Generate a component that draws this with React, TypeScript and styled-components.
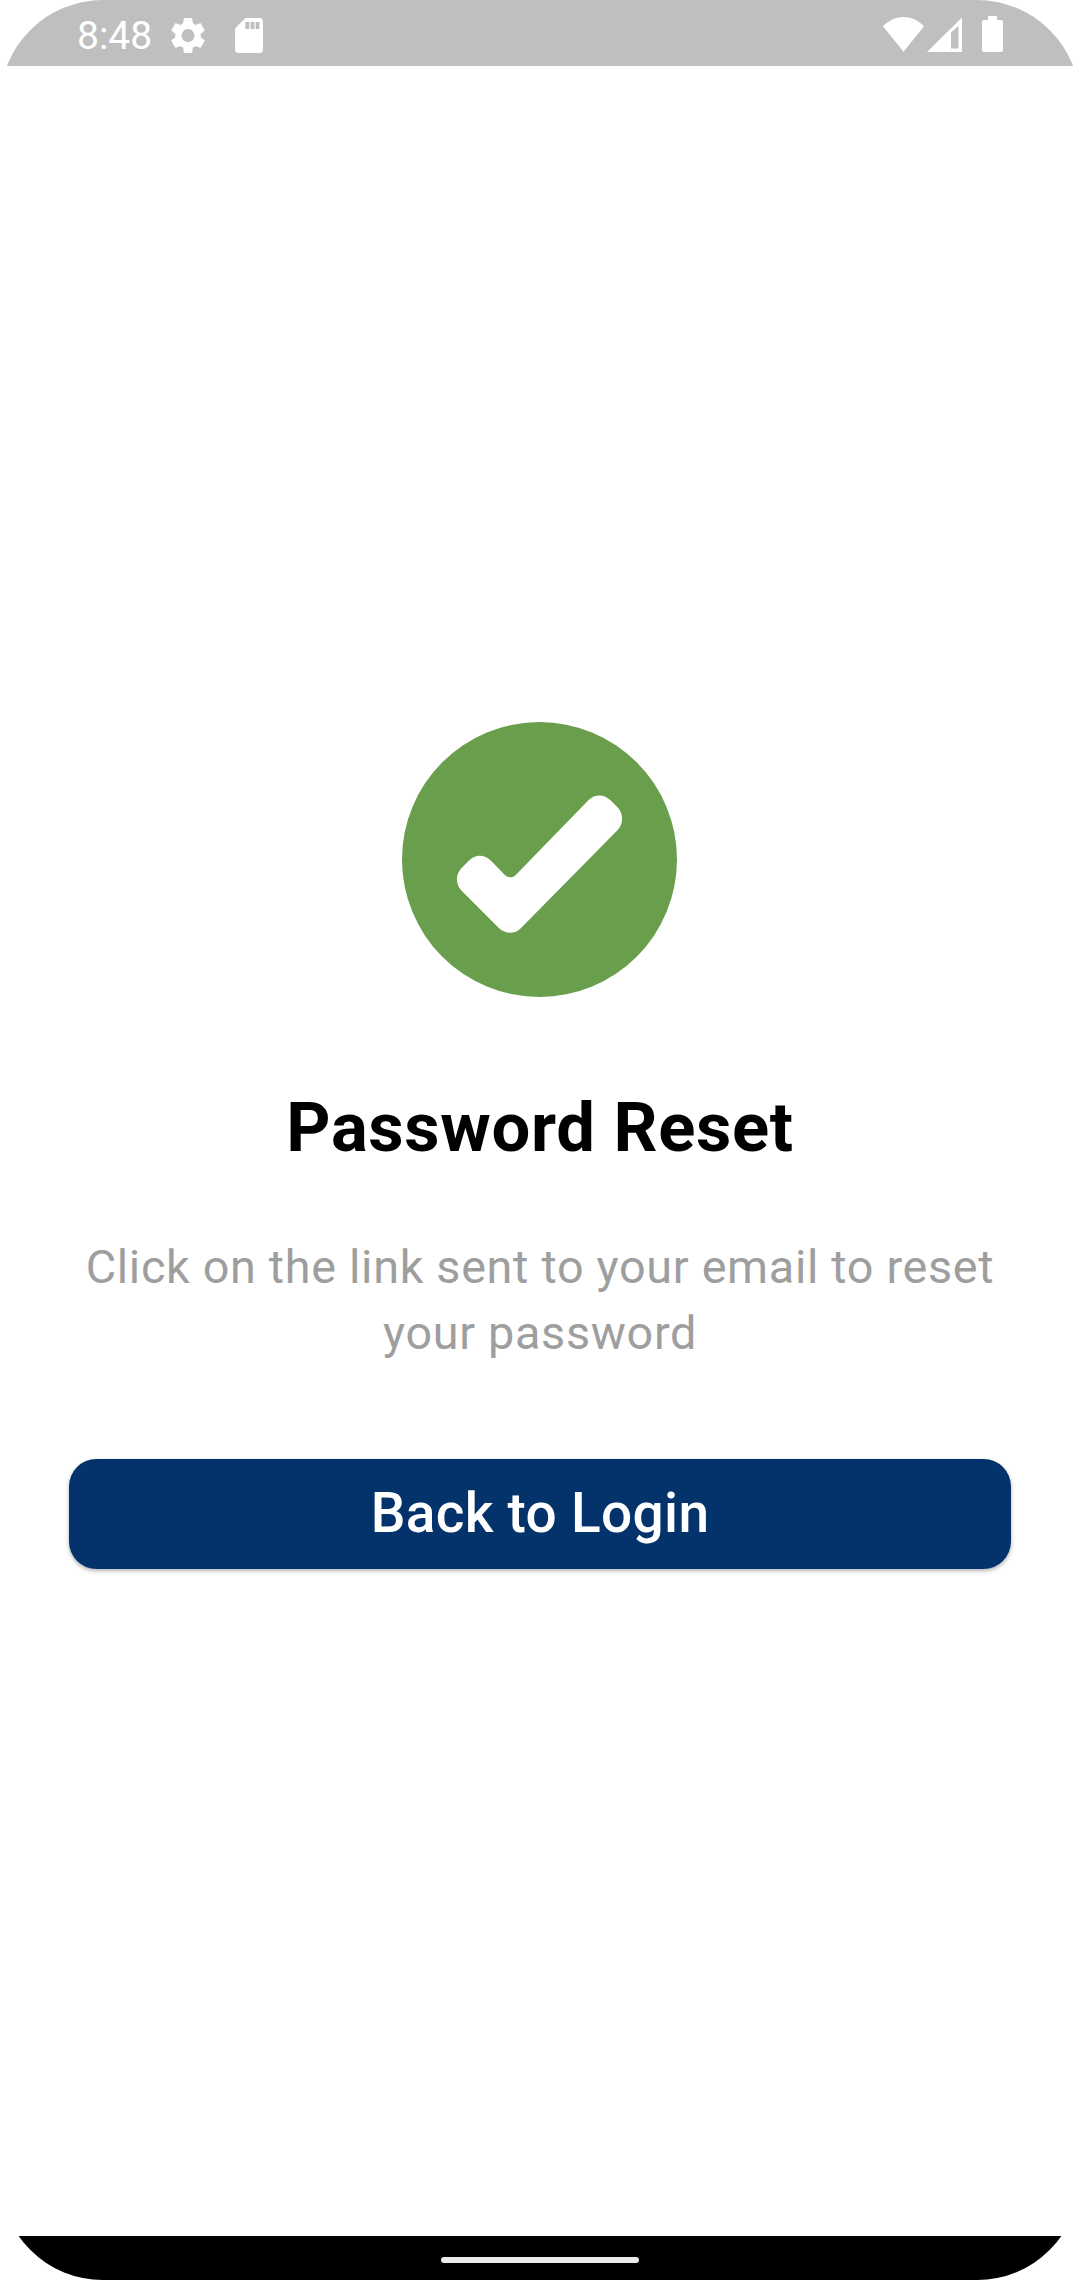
import React from "react";
import styled, { createGlobalStyle } from "styled-components";

const GlobalStyle = createGlobalStyle`
  html, body { margin: 0; padding: 0; background: #fff; }
  * { box-sizing: border-box; }
`;

const Screen = styled.div`
  display: flex;
  flex-direction: column;
  width: 1080px;
  height: 2280px;
  overflow: hidden;
  border-radius: 103px;
  background: #fff;
  font-family: Roboto, "Liberation Sans", sans-serif;
`;

const StatusBar = styled.header`
  display: flex;
  justify-content: space-between;
  flex: none;
  height: 66px;
  padding: 0 77px 0 77px;
  background: #bfbfbf;
  color: #fff;
`;

const StatusGroup = styled.div`
  display: flex;
  align-items: flex-start;
`;

const Clock = styled.span`
  width: 94px;
  padding-top: 13px;
  font-size: 39px;
  line-height: 46px;
  letter-spacing: 0;
  white-space: nowrap;
`;

const StatusIcon = styled.svg<{ $top: number; $left?: number }>`
  display: block;
  flex: none;
  margin-top: ${(p) => p.$top}px;
  margin-left: ${(p) => p.$left ?? 0}px;
  fill: currentColor;
`;

const Main = styled.main`
  display: flex;
  flex: 1;
  flex-direction: column;
  align-items: center;
  padding: 656px 69px 0;
`;

const SuccessBadge = styled.svg`
  display: block;
  flex: none;
  width: 275px;
  height: 275px;
  margin-right: 1px;
`;

const Title = styled.h1`
  margin: 91px 0 0;
  font-size: 68.75px;
  line-height: 80px;
  font-weight: 700;
  letter-spacing: 0.6875px;
  color: #000;
  white-space: nowrap;
`;

const Message = styled.p`
  width: 930px;
  margin: 66px 0 0;
  font-size: 46.75px;
  line-height: 66px;
  letter-spacing: 0.6875px;
  text-align: center;
  color: #9e9e9e;
`;

const LoginButton = styled.button`
  width: 100%;
  height: 110px;
  margin-top: 93px;
  padding: 0 0 2px;
  border: 0;
  border-radius: 27.5px;
  background: #04336b;
  box-shadow: 0 2px 4px rgba(0, 0, 0, 0.3);
  color: #fff;
  font: 500 55px/64px Roboto, "Liberation Sans", sans-serif;
  letter-spacing: 0.3px;
`;

const NavBar = styled.footer`
  display: flex;
  flex: none;
  justify-content: center;
  height: 44px;
  padding-top: 21px;
  background: #000;
`;

const HomeHandle = styled.div`
  width: 198px;
  height: 6px;
  border-radius: 3px;
  background: #ebebeb;
`;

export default function App() {
  return (
    <>
      <GlobalStyle />
      <Screen>
        <StatusBar>
          <StatusGroup>
            <Clock>8:48</Clock>
            <StatusIcon $top={18} width="34" height="35" viewBox="2.4 2.4 19.2 19.2" preserveAspectRatio="none">
              <path d="M19.14 12.94c.04-.3.06-.61.06-.94 0-.32-.02-.64-.07-.94l2.03-1.58c.18-.14.23-.41.12-.61l-1.92-3.32c-.12-.22-.37-.29-.59-.22l-2.39.96c-.5-.38-1.03-.7-1.62-.94L14.4 2.81c-.04-.24-.24-.41-.48-.41h-3.84c-.24 0-.43.17-.47.41L9.25 5.35C8.66 5.59 8.12 5.92 7.63 6.29L5.24 5.33c-.22-.08-.47 0-.59.22L2.74 8.87c-.12.21-.08.47.12.61l2.03 1.58C4.84 11.36 4.8 11.69 4.8 12s.02.64.07.94l-2.03 1.58c-.18.14-.23.41-.12.61l1.92 3.32c.12.22.37.29.59.22l2.39-.96c.5.38 1.03.7 1.62.94l.36 2.54c.05.24.24.41.48.41h3.84c.24 0 .44-.17.47-.41l.36-2.54c.59-.24 1.13-.56 1.62-.94l2.39.96c.22.08.47 0 .59-.22l1.92-3.32c.12-.22.07-.47-.12-.61L19.14 12.94zM12 15.6c-1.98 0-3.6-1.62-3.6-3.6s1.62-3.6 3.6-3.6 3.6 1.62 3.6 3.6-1.62 3.6-3.6 3.6z" />
            </StatusIcon>
            <StatusIcon $top={18} $left={30} width="28" height="35" viewBox="0 0 28 35">
              <path
                fillRule="evenodd"
                d="M11.5 0H24.5A3.5 3.5 0 0 1 28 3.5V31.5A3.5 3.5 0 0 1 24.5 35H3.5A3.5 3.5 0 0 1 0 31.5V12Q0 10.6 1 9.6L9.6 .8Q10.4 0 11.5 0ZM10.3 4V11H14.3V4ZM15.6 4V11H19.4V4ZM20.7 4V11H24.4V4Z"
              />
            </StatusIcon>
          </StatusGroup>
          <StatusGroup>
            <StatusIcon $top={17} width="41" height="35" viewBox="0 0 41 35">
              <path d="M0 9.3C12-3.1 29-3.1 41 9.3L20.5 34.7Z" />
            </StatusIcon>
            <StatusIcon $top={17} $left={3} width="35" height="35" viewBox="0 0 35 35">
              <path fillRule="evenodd" d="M0 35 35 .5V35ZM24 15.5V31.5H31.5V9Z" />
            </StatusIcon>
            <StatusIcon $top={16} $left={20} width="21" height="36" viewBox="0 0 21 36">
              <path d="M6 0h9v4h4a2 2 0 0 1 2 2v28a2 2 0 0 1-2 2H2a2 2 0 0 1-2-2V6a2 2 0 0 1 2-2h4Z" />
            </StatusIcon>
          </StatusGroup>
        </StatusBar>
        <Main>
          <SuccessBadge viewBox="68 66 824 824">
            <circle cx="480" cy="478" r="412" fill="#699e4d" />
            <path
              fill="#fff"
              d="M628 299C645 282 673 282 691 299L713 321C732 340 732 370 715 389L424 684C406 702 378 702 359 684L246 571C228 551 228 523 246 504L269 481C287 462 315 462 334 481L377 525C385 533 400 533 408 525Z"
            />
          </SuccessBadge>
          <Title>Password Reset</Title>
          <Message>Click on the link sent to your email to reset your password</Message>
          <LoginButton type="button">Back to Login</LoginButton>
        </Main>
        <NavBar>
          <HomeHandle />
        </NavBar>
      </Screen>
    </>
  );
}
